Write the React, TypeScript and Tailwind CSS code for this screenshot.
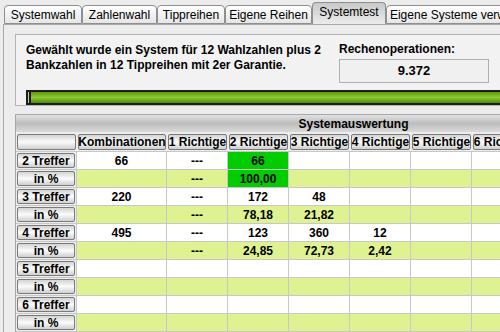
import React from "react";

const tabs = [
  { label: "Systemwahl", w: "w-[78px]" },
  { label: "Zahlenwahl", w: "w-[75px]" },
  { label: "Tippreihen", w: "w-[68px]" },
  { label: "Eigene Reihen", w: "w-[87px]" },
  { label: "Systemtest", w: "w-[74px]", active: true },
  { label: "Eigene Systeme verwalten", w: "w-[150px]" },
];

const cols = ["Kombinationen", "1 Richtige", "2 Richtige", "3 Richtige", "4 Richtige", "5 Richtige", "6 Richtige"];

// each row: label, pct row?, values per column
const rows: { label: string; pct: boolean; vals: string[]; hi?: number }[] = [
  { label: "2 Treffer", pct: false, vals: ["66", "---", "66"], hi: 2 },
  { label: "in %", pct: true, vals: ["", "---", "100,00"], hi: 2 },
  { label: "3 Treffer", pct: false, vals: ["220", "---", "172", "48"] },
  { label: "in %", pct: true, vals: ["", "---", "78,18", "21,82"] },
  { label: "4 Treffer", pct: false, vals: ["495", "---", "123", "360", "12"] },
  { label: "in %", pct: true, vals: ["", "---", "24,85", "72,73", "2,42"] },
  { label: "5 Treffer", pct: false, vals: [] },
  { label: "in %", pct: true, vals: [] },
  { label: "6 Treffer", pct: false, vals: [] },
  { label: "in %", pct: true, vals: [] },
  { label: "", pct: false, vals: [] },
];

function Btn({ children, className = "" }: { children?: React.ReactNode; className?: string }) {
  return (
    <div
      className={
        "flex items-center justify-center border border-[#7a7a7a] rounded-[2px] bg-gradient-to-b from-[#d4d4d4] via-[#fbfbfb] to-[#cfcfcf] font-bold text-[12px] leading-none whitespace-nowrap " +
        className
      }
    >
      {children}
    </div>
  );
}

export default function App() {
  return (
    <div className="w-[500px] h-[332px] overflow-hidden bg-[#ececec] text-black font-['Liberation_Sans',Arial,sans-serif] text-[11px]">
      {/* tab strip */}
      <div className="flex items-end h-[24px] pl-[4px] whitespace-nowrap">
        {tabs.map((t) => (
          <div
            key={t.label}
            className={
              "shrink-0 flex items-center justify-center border border-[#8f8f8f] rounded-t-[4px] text-[12px] " +
              t.w +
              (t.active
                ? " h-[22px] border-b-0 bg-gradient-to-b from-[#c9c9c9] to-[#ececec] pb-[3px]"
                : " h-[19px] bg-gradient-to-b from-[#ffffff] to-[#e6e6e6]")
            }
          >
            {t.label}
          </div>
        ))}
      </div>

      {/* tab panel */}
      <div className="ml-[3px] h-[308px] w-[700px] border-l border-t border-[#a8a8a8] pl-[11px] pt-[9px] flex flex-col gap-[8px]">
        {/* summary box */}
        <div className="h-[72px] border border-[#b4b4b4] bg-[#f2f2f2] pl-[10px] pt-[7px] flex flex-col">
          <div className="flex">
            <div className="w-[313px] font-bold text-[12px] leading-[15px] pt-[1px]">
              Gewählt wurde ein System für 12 Wahlzahlen plus 2
              <br />
              Bankzahlen in 12 Tippreihen mit 2er Garantie.
            </div>
            <div className="flex flex-col">
              <div className="font-bold text-[12px] leading-[14px]">Rechenoperationen:</div>
              <div className="mt-[3px] w-[150px] h-[24px] border border-[#b0b0b0] bg-[#f0f0f0] flex items-center justify-center font-bold text-[13px]">
                9.372
              </div>
            </div>
          </div>
          <div className="mt-[7px] h-[15px] border-[2px] border-[#1c1c1c] flex">
            <div className="w-[3px] bg-[#c8c8c8] border-r-[2px] border-[#1c1c1c]" />
            <div className="flex-1 bg-gradient-to-b from-[#5c9a06] via-[#8cca34] to-[#4d8a00]" />
          </div>
        </div>

        {/* evaluation box */}
        <div className="w-[677px] border border-[#a8a8a8] bg-[#ececec]">
          <div className="h-[18px] bg-gradient-to-b from-[#e2e2e2] via-[#bdbdbd] to-[#dadada] flex items-center justify-center font-bold text-[12px] border-b border-dotted border-[#f8f8f8]">
            Systemauswertung
          </div>
          {/* header row */}
          <div className="flex h-[19px] border-b border-[#c8c8c8]">
            <div className="w-[61px] shrink-0 p-[1px]">
              <Btn className="h-full" />
            </div>
            {cols.map((c, i) => (
              <div key={c} className={(i === 0 ? "w-[90px]" : "w-[61px]") + " shrink-0 p-[1px]"}>
                <Btn className="h-full">{c}</Btn>
              </div>
            ))}
          </div>
          {rows.map((r, ri) => (
            <div key={ri} className="flex h-[18px] border-b border-[#c8c8c8]">
              <div className="w-[61px] shrink-0 p-[1px] border-r border-[#c8c8c8]">
                <Btn className="h-full">{r.label}</Btn>
              </div>
              {cols.map((c, ci) => (
                <div
                  key={c}
                  className={
                    (ci === 0 ? "w-[90px]" : "w-[61px]") +
                    " shrink-0 border-r border-[#c8c8c8] flex items-center justify-center font-bold text-[12px] " +
                    (r.hi === ci ? "bg-[#00cc00]" : r.pct ? "bg-[#dff291]" : "bg-white")
                  }
                >
                  {r.vals[ci] ?? ""}
                </div>
              ))}
            </div>
          ))}
        </div>
      </div>
    </div>
  );
}
